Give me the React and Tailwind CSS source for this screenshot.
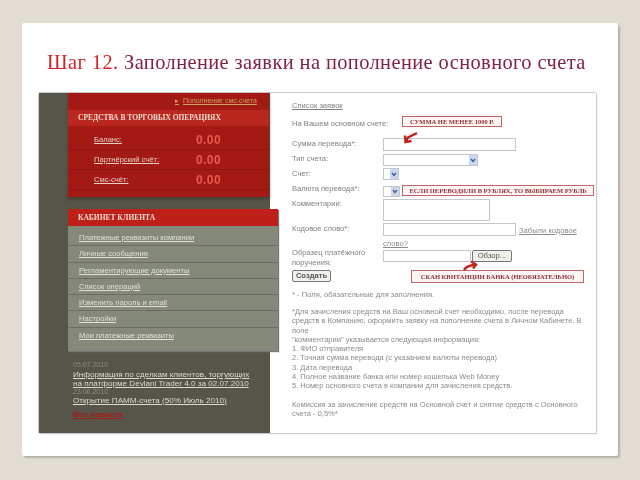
import React from 'react';

const BALANCES = ['Баланс:', 'Партнёрский счёт:', 'Смс-счёт:'];
const MENU = [
  'Платежные реквизиты компании',
  'Личные сообщения',
  'Регламентирующие документы',
  'Список операций',
  'Изменить пароль и email',
  'Настройки',
  'Мои платежные реквизиты',
];
const NOTES = [
  '*Для зачисления средств на Ваш основной счет необходимо, после перевода',
  'средств в Компанию, оформить заявку на пополнение счета в Личном Кабинете. В',
  'поле',
  '"комментарии" указывается следующая информация:',
  '1.  ФИО отправителя',
  '2.  Точная сумма перевода (с указанием валюты перевода)',
  '3. Дата перевода',
  '4. Полное название банка или номер кошелька Web Money',
  '5. Номер основного счета в компании для зачисления средств.',
];

function Field({ label, height, children }) {
  return (
    <div className="flex items-start" style={{ height }}>
      <div className="w-[91px] shrink-0 text-[#808085] leading-[10px]">{label}</div>
      <div className="flex items-start">{children}</div>
    </div>
  );
}

function SelectBox({ width, height = 12 }) {
  return (
    <div className="flex justify-end border border-[#c4c8cc] bg-white" style={{ width, height }}>
      <div className="flex w-[8px] items-center justify-center bg-[#c9d7ee]">
        <svg width="6" height="5" viewBox="0 0 6 5">
          <path d="M1 1l2 2.5L5 1" fill="none" stroke="#3d5f9e" strokeWidth="1.4" />
        </svg>
      </div>
    </div>
  );
}

function Note({ className, children }) {
  return (
    <div
      className={`absolute flex items-center justify-center whitespace-nowrap border border-[#c0666a] bg-[#fdf6f4] font-['Liberation_Serif',serif] text-[6.5px] font-bold text-[#8e3036] blur-[0.25px] ${className}`}
    >
      {children}
    </div>
  );
}

export default function App() {
  return (
    <div className="h-[480px] w-[640px] overflow-hidden bg-[#e2ddd2] pl-[22px] pt-[23px] font-['Liberation_Sans',sans-serif]">
      <div className="h-[433px] w-[596px] rounded-[2px] bg-white pl-[17px] pt-[27px] shadow-[2px_2px_2px_#b3b0a8]">
        <h1 className="ml-[8px] h-[43px] whitespace-nowrap font-['Liberation_Serif',serif] text-[20.4px] leading-[24px] tracking-[0.42px] text-[#86203f] blur-[0.25px]">
          <span className="text-[#d4222c]">Шаг 12.</span> Заполнение заявки на пополнение основного счета
        </h1>

        <div className="flex h-[340px] w-[557px] rounded-[2px] shadow-[0_0_0_1px_#c9c9c9,1px_1px_1px_#aaa]">
          {/* left column */}
          <div className="relative z-10 w-[231px] shrink-0 bg-[#575449]">
            <div className="ml-[29px] h-[104px] w-[201px] bg-[#a31a14] shadow-[0_2px_3px_#3f3d35]">
              <div className="flex h-[17px] items-center pl-[107px] text-[7px] text-[#c9a25e] underline blur-[0.4px]">
                <span className="mr-[4px] no-underline">▸</span>Пополнение смс-счета
              </div>
              <div className="flex h-[16px] items-center bg-[#b9271e] pl-[10px] font-['Liberation_Serif',serif] text-[7.5px] font-bold text-[#f0dcd0] blur-[0.25px]">
                СРЕДСТВА В ТОРГОВЫХ ОПЕРАЦИЯХ
              </div>
              <div className="pt-[4px]">
                {BALANCES.map((name) => (
                  <div key={name} className="flex h-[20px] items-center border-b border-[#8f1610]">
                    <div className="w-[128px] pl-[26px] text-[7.6px] text-[#e6cfc4] underline blur-[0.4px]">{name}</div>
                    <div className="text-[12px] font-bold tracking-[0.4px] text-[#e8594f] blur-[0.25px]">0.00</div>
                  </div>
                ))}
              </div>
            </div>

            <div className="ml-[29px] mt-[12px] w-[210px] shadow-[1px_1px_1px_#777]">
              <div className="flex h-[17px] items-center bg-[#bd2019] pl-[10px] font-['Liberation_Serif',serif] text-[7.5px] font-bold text-[#f0dcd0] blur-[0.25px]">
                КАБИНЕТ КЛИЕНТА
              </div>
              <div className="h-[125px] bg-[#84897a] pt-[4px]">
                {MENU.map((item) => (
                  <div
                    key={item}
                    className="flex h-[16.3px] items-center border-b border-[#6a6f62] pl-[11px] text-[7.6px] text-[#dfe1d8] underline blur-[0.4px] last:border-b-0"
                  >
                    {item}
                  </div>
                ))}
              </div>
            </div>

            <div className="ml-[34px] mt-[10px] w-[186px] text-[8.1px] leading-[8.5px] text-[#dcdad2] blur-[0.35px]">
              <div className="h-[10px] text-[7px] text-[#8e8b80]">05.07.2010</div>
              <div className="underline">Информация по сделкам клиентов, торгующих на платформе Devlani Trader 4.0 за 02.07.2010</div>
              <div className="text-[7px] text-[#8e8b80]">23.06.2010</div>
              <div className="underline">Открытие ПАММ-счета (50% Июль 2010)</div>
              <div className="mt-[6px] font-bold text-[#a51b18] underline">Все новости</div>
            </div>
          </div>

          {/* right column */}
          <div className="relative flex-1 bg-white pl-[22px] pt-[7px] text-[7.6px] blur-[0.35px]">
            <div className="h-[18px] text-[#808085] underline">Список заявок</div>
            <div className="h-[21px] text-[#808085]">На Вашем основном счете:</div>
            <Field label="Сумма перевода*:" height={15}>
              <div className="-mt-[1px] h-[13px] w-[133px] border border-[#c4c8cc]" />
            </Field>
            <Field label="Тип счета:" height={15}>
              <SelectBox width={95} />
            </Field>
            <Field label="Счет:" height={15}>
              <div className="-mt-[1px]"><SelectBox width={16} /></div>
            </Field>
            <Field label="Валюта перевода*:" height={15}>
              <div className="mt-[2px]"><SelectBox width={17} height={11} /></div>
            </Field>
            <Field label="Комментарии:" height={25}>
              <div className="h-[22px] w-[107px] border border-[#c4c8cc]" />
            </Field>
            <Field label="Кодовое слово*:" height={14}>
              <div className="-mt-[1px] h-[13px] w-[133px] border border-[#c4c8cc]" />
              <span className="ml-[3px] mt-[1px] text-[#8a8a8e] underline">Забыли кодовое</span>
            </Field>
            <div className="h-[9px] pl-[91px] text-[#8a8a8e] underline">слово?</div>
            <div className="flex h-[26px] items-start">
              <div className="w-[91px] pt-[1px] leading-[10px] text-[#808085]">Образец платёжного поручения:</div>
              <div className="mt-[3px] h-[12px] w-[88px] border border-[#c4c8cc]" />
              <div className="ml-[1px] mt-[3px] flex h-[12px] w-[40px] items-center justify-center rounded-[2px] border border-[#77777b] bg-[#f1f0ea] text-[#555]">
                Обзор...
              </div>
            </div>
            <div className="-mt-[3px] flex h-[12px] w-[39px] items-center justify-center rounded-[2px] border border-[#77777b] bg-[#f1f0ea] font-bold text-[#555]">
              Создать
            </div>
            <div className="mt-[7px] h-[18px] text-[#8a8a8e]">* - Поля, обязательные для заполнения.</div>
            <div className="whitespace-nowrap text-[7.5px] leading-[9.3px] text-[#8a8a8e]">
              {NOTES.map((line) => (
                <div key={line}>{line}</div>
              ))}
              <div className="mt-[9.3px]">Комиссия за зачисление средств на Основной счет и снятие средств с Основного</div>
              <div>счета - 0,5%*</div>
            </div>
          </div>

          {/* annotations drawn over the form */}
          <div className="pointer-events-none absolute left-0 top-0 z-20">
            <Note className="left-[402px] top-[116px] h-[11px] w-[100px]">СУММА НЕ МЕНЕЕ 1000 Р.</Note>
            <Note className="left-[402px] top-[185px] h-[11px] w-[192px]">ЕСЛИ ПЕРЕВОДИЛИ В РУБЛЯХ, ТО ВЫБИРАЕМ РУБЛЬ</Note>
            <Note className="left-[411px] top-[270px] h-[13px] w-[173px]">СКАН КВИТАНЦИИ БАНКА (НЕОБЯЗАТЕЛЬНО)</Note>
            <svg className="absolute left-[400px] top-[128px]" width="22" height="18" viewBox="0 0 22 18">
              <path d="M17 5 8 9.500 5.500 14M5 7.500 5.500 14l6-1" fill="none" stroke="#c4201c" strokeWidth="2.4" />
            </svg>
            <svg className="absolute left-[460px] top-[258px]" width="20" height="16" viewBox="0 0 20 16">
              <path d="M4 12c2-3 4-4 11-5.500M11 3.500l5 3-3 4" fill="none" stroke="#c4201c" strokeWidth="2.4" />
            </svg>
          </div>
        </div>
      </div>
    </div>
  );
}
